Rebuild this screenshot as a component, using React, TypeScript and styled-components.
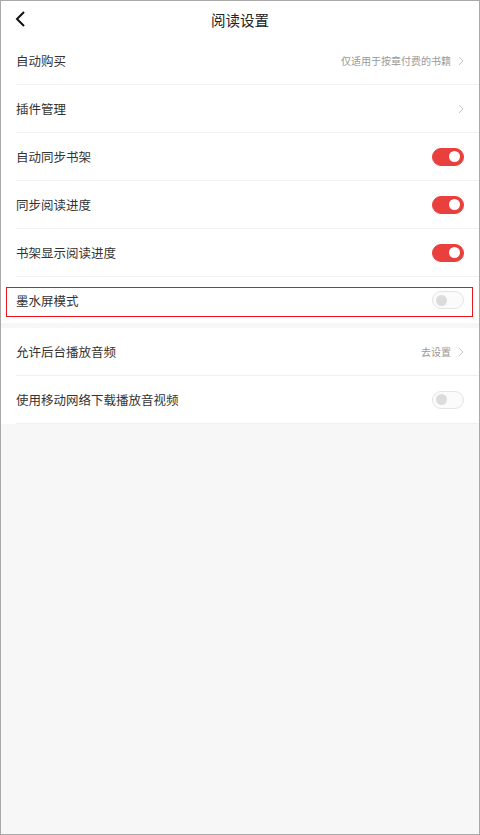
import React from "react"
import styled, { createGlobalStyle } from "styled-components"

const GlobalStyle = createGlobalStyle`
    html, body {
        margin: 0;
        padding: 0;
        background: #f7f7f7;
    }
    * {
        box-sizing: border-box;
    }
`

const Page = styled.div`
    width: 480px;
    height: 835px;
    border: 1px solid #a9a9a9;
    background: #f7f7f7;
    font-family: "Noto Sans CJK SC", "Noto Sans", sans-serif;
    color: #333;
    overflow: hidden;
`

const Header = styled.header`
    height: 36px;
    background: #fff;
    display: flex;
    align-items: center;
    justify-content: center;
    position: relative;
`

const BackButton = styled.span`
    position: absolute;
    left: 13px;
    top: 9px;
    display: flex;
`

const Title = styled.h1`
    margin: 0;
    font-size: 14.5px;
    font-weight: 400;
    color: #222;
`

const Section = styled.section`
    background: #fff;
`

const Gap = styled.div`
    height: 5px;
`

const Row = styled.div`
    position: relative;
    padding-left: 15px;
    background: #fff;
`

const RowInner = styled.div<{ $last?: boolean }>`
    height: ${({ $last }) => ($last ? "46px" : "48px")};
    display: flex;
    align-items: center;
    justify-content: space-between;
    padding-right: 15px;
    border-bottom: ${({ $last }) => ($last ? "none" : "1px solid #f0f0f0")};
`

const Label = styled.span`
    font-size: 12.5px;
    color: #333;
`

const Extra = styled.span`
    display: flex;
    align-items: center;
    gap: 7px;
    font-size: 10px;
    color: #999;
`

const Switch = styled.span<{ $on?: boolean }>`
    width: 32px;
    height: 18px;
    border-radius: 9px;
    display: flex;
    align-items: center;
    padding: 0 3px;
    justify-content: ${({ $on }) => ($on ? "flex-end" : "flex-start")};
    background: ${({ $on }) => ($on ? "#ea3f3f" : "#fbfbfb")};
    border: 1px solid ${({ $on }) => ($on ? "#ea3f3f" : "#e4e4e4")};

    &::after {
        content: "";
        width: 11px;
        height: 11px;
        border-radius: 50%;
        background: ${({ $on }) => ($on ? "#fff" : "#dcdcdc")};
    }
`

const Highlight = styled.div`
    position: absolute;
    left: 5px;
    right: 6px;
    top: 10px;
    bottom: 6px;
    border: 1.5px solid #e8161c;
    pointer-events: none;
`

const Chevron = () => (
    <svg width="6" height="10" viewBox="0 0 6 10">
        <path d="M1 1l4 4-4 4" fill="none" stroke="#c8c8c8" strokeWidth="1" />
    </svg>
)

const BackIcon = () => (
    <svg width="12" height="18" viewBox="0 0 12 18">
        <path d="M10 2L3 9l7 7" fill="none" stroke="#111" strokeWidth="2" />
    </svg>
)

type Item = {
    label: string
    extra?: string
    chevron?: boolean
    toggle?: boolean
    on?: boolean
    highlight?: boolean
}

const first: Item[] = [
    { label: "自动购买", extra: "仅适用于按章付费的书籍", chevron: true },
    { label: "插件管理", chevron: true },
    { label: "自动同步书架", toggle: true, on: true },
    { label: "同步阅读进度", toggle: true, on: true },
    { label: "书架显示阅读进度", toggle: true, on: true },
    { label: "墨水屏模式", toggle: true, highlight: true },
]

const second: Item[] = [
    { label: "允许后台播放音频", extra: "去设置", chevron: true },
    { label: "使用移动网络下载播放音视频", toggle: true },
]

const SettingRow = ({ item, last }: { item: Item; last?: boolean }) => (
    <Row>
        <RowInner $last={last}>
            <Label>{item.label}</Label>
            {item.toggle ? (
                <Switch $on={item.on} />
            ) : (
                <Extra>
                    {item.extra}
                    {item.chevron && <Chevron />}
                </Extra>
            )}
        </RowInner>
        {item.highlight && <Highlight />}
    </Row>
)

export default function App() {
    return (
        <Page>
            <GlobalStyle />
            <Header>
                <BackButton>
                    <BackIcon />
                </BackButton>
                <Title>阅读设置</Title>
            </Header>
            <Section>
                {first.map((item, i) => (
                    <SettingRow key={item.label} item={item} last={i === first.length - 1} />
                ))}
            </Section>
            <Gap />
            <Section>
                {second.map((item) => (
                    <SettingRow key={item.label} item={item} />
                ))}
            </Section>
        </Page>
    )
}
